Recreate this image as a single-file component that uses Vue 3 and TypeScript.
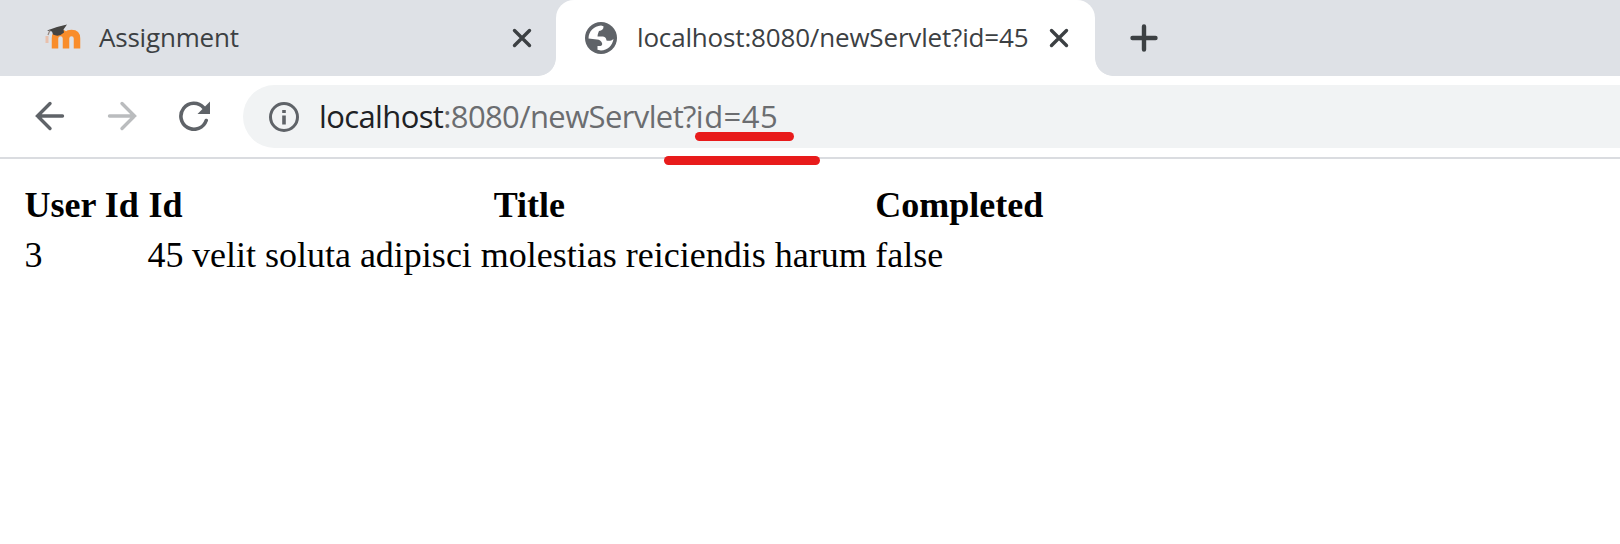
<script setup lang="ts">
interface Todo {
  userId: number
  id: number
  title: string
  completed: boolean
}

const host = 'localhost'
const path = ':8080/newServlet?'
const query = 'id=45'

const todos: Todo[] = [
  { userId: 3, id: 45, title: 'velit soluta adipisci molestias reiciendis harum', completed: false },
]
</script>

<template>
  <div class="browser">
    <header class="tabs">
      <div class="tab">
        <svg class="moodle" viewBox="0 0 38 30">
          <path class="faded" d="M3 13V20" />
          <path class="m" d="M11 25.500V15.500q0-5.500 5.500-5.500q5.500 0 5.500 5.500v10M22 25.500V15.500q0-5.500 5.500-5.500q5.500 0 5.500 5.500v10" />
          <path class="cap" d="M3 7.500L13 4L23 1.500L19.500 6.500L20 9.500Q15 14.500 9 11.500L8 8.500Z" />
          <path class="tassel" d="M6 7L4 12" />
        </svg>
        <span class="label first">Assignment</span>
        <svg class="close" viewBox="0 0 20 20"><path d="M2.500 2.500L17.500 17.500M17.500 2.500L2.500 17.500" /></svg>
      </div>
      <div class="tab active">
        <svg class="globe" viewBox="0 0 32 32">
          <circle cx="16" cy="16" r="16" />
          <path d="M3.500 16.500C3.500 9.500 9 4 16 3.600L18.500 4.200C18.700 7 17 8.800 14 9C13.500 10.500 12.800 11.500 12.500 14.500H18C20.500 14.800 21 16 21.500 18.500C23.500 19 26.500 19 28.500 17C27.500 23.500 22.500 28.400 16 28.400L12.500 27.800V24H15.500C17 23.500 17.500 22.500 17 21C16 18.500 14.500 17.800 12 17.500Z" />
        </svg>
        <span class="label second">{{ host }}{{ path }}{{ query }}</span>
        <svg class="close" viewBox="0 0 20 20"><path d="M2.500 2.500L17.500 17.500M17.500 2.500L2.500 17.500" /></svg>
      </div>
      <svg class="plus" viewBox="0 0 28 28"><path d="M14 2.500V25.500M2.500 14H25.500" /></svg>
    </header>

    <nav class="toolbar">
      <svg class="nav" viewBox="0 0 30 30"><path d="M27.500 15H2.500M15 2.500L2.500 15L15 27.500" /></svg>
      <svg class="nav forward" viewBox="0 0 30 30"><path d="M2.500 15H27.500M15 2.500L27.500 15L15 27.500" /></svg>
      <svg class="nav reload" viewBox="0 0 32 30">
        <path d="M27.200 19.500A13 13 0 1 1 24.500 6.500" />
        <path class="head" d="M31 0.500V13H18.500Z" />
      </svg>
      <div class="omnibox">
        <svg class="info" viewBox="0 0 30 30">
          <circle cx="15" cy="15" r="13.500" />
          <path d="M15 8V11M15 13.500V22.500" />
        </svg>
        <span class="url"><b>{{ host }}</b><span>{{ path }}</span><span class="query">{{ query }}</span></span>
      </div>
      <i class="mark small"></i>
      <i class="mark large"></i>
    </nav>

    <main class="page">
      <table>
        <thead>
          <tr><th>User Id</th><th>Id</th><th>Title</th><th>Completed</th></tr>
        </thead>
        <tbody>
          <tr v-for="todo in todos" :key="todo.id">
            <td>{{ todo.userId }}</td><td>{{ todo.id }}</td><td>{{ todo.title }}</td><td>{{ todo.completed }}</td>
          </tr>
        </tbody>
      </table>
    </main>
  </div>
</template>

<style>
body { margin: 0; background: #fff; overflow: hidden; }
</style>

<style scoped>
.browser { width: 1620px; height: 544px; overflow: hidden; background: #fff; }
svg { display: block; flex: none; fill: none; }
.tabs { display: flex; align-items: center; height: 76px; background: #dee1e6; }
.tab {
  display: flex; align-items: center; box-sizing: border-box; flex: none;
  width: 556px; height: 76px; padding: 0 24px 0 44px; position: relative;
}
.tab.active {
  width: 539px; padding: 0 26px 0 29px; background: #fff; border-radius: 18px 18px 0 0;
}
.tab.active::before, .tab.active::after {
  content: ''; position: absolute; bottom: 0; width: 18px; height: 18px;
}
.tab.active::before { left: -18px; background: radial-gradient(circle at 0 0, #dee1e6 17.500px, #fff 18.200px); }
.tab.active::after { right: -18px; background: radial-gradient(circle at 100% 0, #dee1e6 17.500px, #fff 18.200px); }
.moodle { width: 38px; height: 30px; }
.moodle .m { stroke: #f98d2b; stroke-width: 6.5; }
.moodle .faded { stroke: #e9c0ac; stroke-width: 3; }
.moodle .cap { fill: #454442; }
.moodle .tassel { stroke: #92847e; stroke-width: 1.2; }
.label {
  color: #3c4043; font: 26px/36px "Open Sans", "Noto Sans", sans-serif;
  white-space: nowrap; margin-right: auto; padding-bottom: 2px;
}
.first { margin-left: 17px; letter-spacing: -0.2px; }
.second { margin-left: 20px; letter-spacing: -0.170px; }
.globe { width: 32px; height: 32px; fill: #5f6368; }
.globe path { fill: #fff; }
.close { width: 20px; height: 20px; stroke: #3c4043; stroke-width: 3.4; stroke-linecap: round; }
.plus { width: 28px; height: 28px; margin-left: 35px; stroke: #3c4043; stroke-width: 4.4; stroke-linecap: round; }
.toolbar {
  position: relative; display: flex; align-items: center; box-sizing: border-box;
  height: 83px; padding: 0 0 0 35px; border-bottom: 2px solid #dadce0;
}
.nav { width: 30px; height: 30px; margin: 0 42px 2px 0; stroke: #5f6368; stroke-width: 3.4; stroke-linecap: round; }
.forward { stroke: #babcbe; }
.reload { width: 32px; margin: 0 32px 1px 0; stroke-width: 3.6; }
.reload .head { fill: #5f6368; stroke: none; }
.omnibox {
  display: flex; align-items: center; flex: 1; box-sizing: border-box; height: 63px;
  padding: 0 0 0 26px; border-radius: 32px 0 0 32px; background: #f1f3f4;
}
.info { width: 30px; height: 30px; stroke: #5f6368; stroke-width: 3; }
.info path { stroke-width: 3.6; }
.url {
  margin-left: 20px; padding-bottom: 2px; color: #6b6d70; white-space: pre;
  font: 31px/42px "Open Sans", "Noto Sans", sans-serif; letter-spacing: -0.620px;
}
.url b { font-weight: 400; color: #202124; }
.query { letter-spacing: 0.5px; }
.mark { position: absolute; height: 9px; border-radius: 5px; background: #e81b1b; }
.small { left: 695px; top: 56px; width: 99px; }
.large { left: 664px; top: 80px; width: 156px; }
.page { padding: 20px 18.300px; color: #000; font: 36px/41px "Liberation Serif", "Times New Roman", serif; }
table { border-spacing: 4.500px; border-collapse: separate; white-space: nowrap; }
th, td { padding: 2.250px; }
td { text-align: left; }
</style>
